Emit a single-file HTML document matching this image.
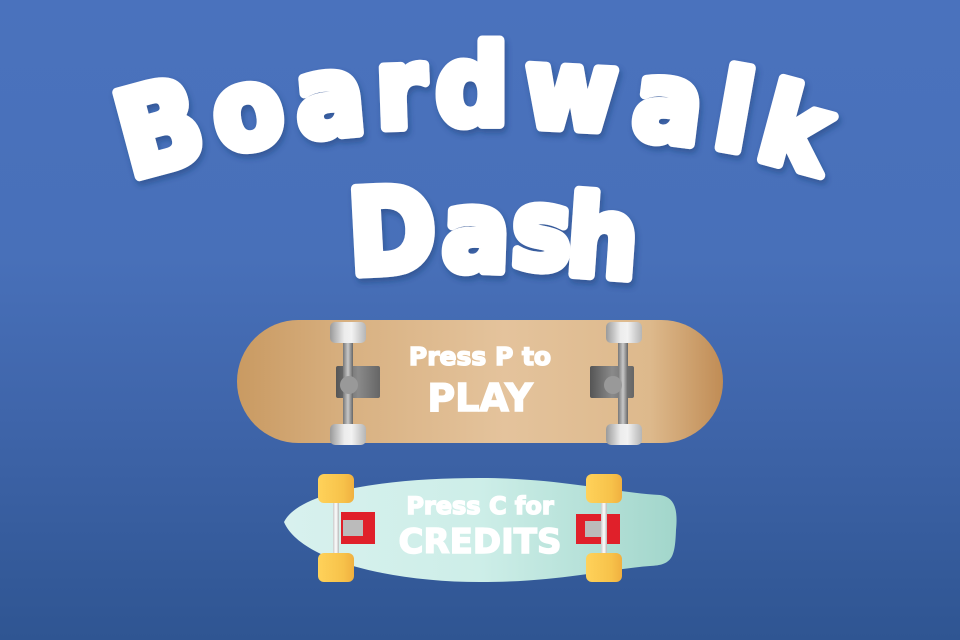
<!DOCTYPE html>
<html><head><meta charset="utf-8"><style>
html,body{margin:0;padding:0}
body{width:960px;height:640px;overflow:hidden;position:relative;background:linear-gradient(#4a72bd 0%,#4870b9 40%,#3f65aa 65%,#2f5592 100%);font-family:"DejaVu Sans","Liberation Sans",sans-serif}
.abs{position:absolute}
.deck{left:237px;top:320px;width:486px;height:123px;border-radius:62px;background:linear-gradient(90deg,#c99a62 0%,#d9b283 25%,#e4c39c 55%,#ddb98c 85%,#c08c55 100%);}
.wh{width:36px;height:21px;border-radius:5px;background:linear-gradient(90deg,#9a9a9a,#ececec 40%,#f2f2f2 60%,#b5b5b5)}
.axle{width:10px;height:104px;background:linear-gradient(90deg,#777,#c8c8c8,#666);border-radius:3px}
.plate{width:44px;height:32px;background:linear-gradient(90deg,#555,#8a8a8a,#666);border-radius:2px}
.t{color:#fff;font-weight:bold;text-align:center;white-space:nowrap;-webkit-text-stroke:1.5px #fff}
.yw{width:36px;height:29px;border-radius:6px;background:linear-gradient(90deg,#ffd25a,#f7c24a 70%,#f0b040)}
.ax2{width:6px;height:80px;background:linear-gradient(90deg,#ccc,#fff,#bbb)}
</style></head><body>
<svg class="abs" style="left:0;top:0" width="960" height="300">
<defs><filter id="sh" x="-20%" y="-20%" width="140%" height="140%"><feDropShadow dx="2" dy="4" stdDeviation="3" flood-color="#1d3870" flood-opacity="0.45"/></filter></defs>
<g fill="#fff" stroke="#fff" stroke-width="9" stroke-linejoin="round" font-family="DejaVu Sans, sans-serif" font-weight="bold" font-size="100" text-anchor="middle" filter="url(#sh)">
<text x="170" y="168" font-size="108" transform="rotate(-15 170 168) translate(170 168) scale(1.02 1.1) translate(-170 -168)">B</text>
<text x="254" y="147" transform="rotate(-10 254 147) translate(254 147) scale(1.02 1.1) translate(-254 -147)">o</text>
<text x="333" y="135" transform="rotate(-5 333 135) translate(333 135) scale(1.02 1.1) translate(-333 -135)">a</text>
<text x="402" y="127" transform="rotate(-2 402 127) translate(402 127) scale(1.02 1.1) translate(-402 -127)">r</text>
<text x="472" y="124" transform="translate(472 124) scale(1.02 1.1) translate(-472 -124)">d</text>
<text x="569" y="128" transform="rotate(3 569 128) translate(569 128) scale(1.0 1.1) translate(-569 -128)">w</text>
<text x="664" y="141" transform="rotate(7 664 141) translate(664 141) scale(1.02 1.1) translate(-664 -141)">a</text>
<text x="728" y="149" transform="rotate(10 728 149) translate(728 149) scale(1.02 1.1) translate(-728 -149)">l</text>
<text x="786" y="166" transform="rotate(15 786 166) translate(786 166) scale(1.02 1.1) translate(-786 -166)">k</text>
<text x="394" y="272" font-size="106" transform="rotate(-3 394 272) translate(394 272) scale(1.0 1.1) translate(-394 -272)">D</text>
<text x="475" y="270" transform="rotate(2 475 270) translate(475 270) scale(1.0 1.1) translate(-475 -270)">a</text>
<text x="540" y="268" transform="rotate(3 540 268) translate(540 268) scale(1.0 1.1) translate(-540 -268)">s</text>
<text x="600" y="276" transform="rotate(4 600 276) translate(600 276) scale(1.0 1.1) translate(-600 -276)">h</text>
</g></svg>

<div class="abs deck"></div>
<div class="abs plate" style="left:336px;top:366px"></div>
<div class="abs axle" style="left:343px;top:331px"></div>
<div class="abs" style="left:340px;top:376px;width:18px;height:18px;border-radius:50%;background:#999"></div>
<div class="abs wh" style="left:330px;top:322px"></div>
<div class="abs wh" style="left:330px;top:424px"></div>
<div class="abs plate" style="left:590px;top:366px"></div>
<div class="abs axle" style="left:618px;top:331px"></div>
<div class="abs" style="left:604px;top:376px;width:18px;height:18px;border-radius:50%;background:#999"></div>
<div class="abs wh" style="left:606px;top:322px"></div>
<div class="abs wh" style="left:606px;top:424px"></div>
<div class="abs t" style="left:380px;width:200px;top:342px;font-size:25px">Press P to</div>
<div class="abs t" style="left:380px;width:200px;top:376px;font-size:38px">PLAY</div>

<svg class="abs" style="left:280px;top:470px" width="400" height="120">
<defs><linearGradient id="mg" x1="0" x2="1"><stop offset="0" stop-color="#d8f1ee"/><stop offset="0.5" stop-color="#cdeee8"/><stop offset="1" stop-color="#a2d6cb"/></linearGradient></defs>
<path d="M4 52 C20 20 110 8 200 8 C280 8 330 22 380 25 C395 27 398 40 396 60 C395 88 392 95 370 96 C320 100 280 112 200 112 C110 112 20 90 4 52 Z" fill="url(#mg)"/>
</svg>
<div class="abs ax2" style="left:333px;top:492px"></div>
<div class="abs" style="left:341px;top:512px;width:34px;height:32px;background:#e0202a"></div>
<div class="abs" style="left:343px;top:520px;width:20px;height:16px;background:#bbb"></div>
<div class="abs yw" style="left:318px;top:474px"></div>
<div class="abs yw" style="left:318px;top:553px"></div>
<div class="abs ax2" style="left:601px;top:492px"></div>
<div class="abs" style="left:576px;top:514px;width:44px;height:30px;background:#e0202a"></div>
<div class="abs" style="left:585px;top:521px;width:22px;height:16px;background:#bbb"></div>
<div class="abs ax2" style="left:601px;top:510px;height:40px"></div>
<div class="abs yw" style="left:586px;top:474px"></div>
<div class="abs yw" style="left:586px;top:553px"></div>
<div class="abs t" style="left:380px;width:200px;top:492px;font-size:24px">Press C for</div>
<div class="abs t" style="left:380px;width:200px;top:522px;font-size:34px">CREDITS</div>
</body></html>
